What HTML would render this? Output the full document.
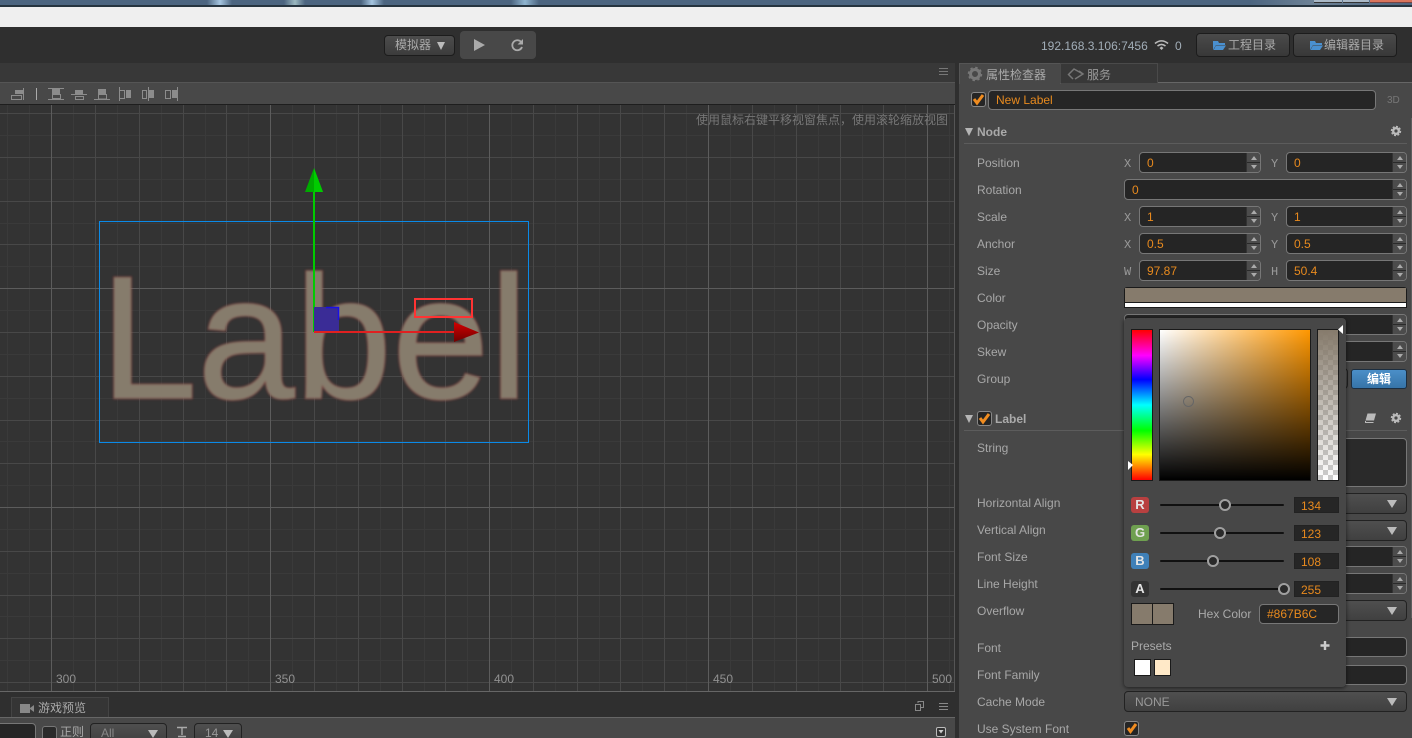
<!DOCTYPE html>
<html><head><meta charset="utf-8">
<style>
*{box-sizing:border-box}
html{margin:0;padding:0;width:1412px;height:738px;overflow:hidden;background:#333}
body{margin:0;padding:0;width:1412px;height:738px;overflow:hidden;position:relative;background:#333;font-family:"Liberation Sans","Noto Sans CJK SC",sans-serif;font-size:12px;color:#aaa}
.a,.t,.l,.i,.f,.s,.sel,.btn,.v,.chip,.n{position:absolute}
.t,.l{white-space:nowrap;line-height:14px}
.l{left:977px;color:#a8a8a8}
.x{position:absolute;font-family:"Liberation Mono",monospace;font-size:12px;color:#999;line-height:14px}
.i{height:21px;background:#252525;border:1px solid #777;border-radius:4px;color:#e88a1e;padding-left:7px;line-height:20px;overflow:hidden}
.i:after{content:"";position:absolute;right:0;top:0;bottom:0;width:13px;background:linear-gradient(#4c4c4c 0 9px,#2a2a2a 9px 10px,#4c4c4c 10px);border-left:1px solid #333}
.s1,.s2{position:absolute;width:0;height:0;border-left:3.5px solid transparent;border-right:3.5px solid transparent;z-index:2}
.s1{border-bottom:4px solid #aaa}.s2{border-top:4px solid #aaa}
.f{height:20px;background:#252525;border:1px solid #777;border-radius:4px}
.sel{height:21px;background:linear-gradient(#4f4f4f,#404040);border:1px solid #222;border-radius:4px;color:#999}
.arr{position:absolute;width:0;height:0;border-left:5px solid transparent;border-right:5px solid transparent;border-top:8px solid #bbb}
.btn{background:linear-gradient(#4a4a4a,#383838);border:1px solid #1c1c1c;border-radius:4px;color:#aaa;text-align:center}
.cb{position:absolute;width:15px;height:15px;background:#252525;border:1px solid #888;border-radius:3px}
.chip{left:1131px;width:18px;height:16px;border-radius:3px;color:#e4e4e4;font-weight:bold;font-size:13px;line-height:15px;text-align:center}
.track{position:absolute;left:1160px;width:124px;height:2px;background:#111;border-radius:1px}
.thumb{position:absolute;width:12px;height:12px;border-radius:50%;background:#2a2a2a;border:2px solid #a0a0a0}
.n{left:1294px;width:45px;height:16px;background:#262626;border:1px solid #222;color:#e88a1e;padding-left:6px;line-height:16px}
svg{position:absolute;left:0;top:0;overflow:visible}
</style></head><body>

<!-- top window strip -->
<div class="a" style="left:0;top:0;width:1412px;height:6px;background:linear-gradient(90deg,#4c6580 0,#4c6580 207px,#a5c5e0 220px,#4c6580 232px,#4c6580 284px,#9bb8c0 295px,#4c6580 305px,#4c6580 361px,#a5c5e0 372px,#4c6580 384px,#4c6580 511px,#8fb5d0 525px,#4c6580 539px,#4c6580 1250px,#6d8296 1312px,#4c6580 1412px)"></div>
<div class="a" style="left:1314px;top:0;width:28px;height:3px;background:#a9b8c6;border-bottom:1px solid #333"></div>
<div class="a" style="left:1343px;top:0;width:26px;height:3px;background:#a9b8c6;border-bottom:1px solid #333"></div>
<div class="a" style="left:1370px;top:0;width:42px;height:3px;background:#d9745c;border-bottom:1px solid #744"></div>
<div class="a" style="left:0;top:5px;width:1412px;height:2px;background:#26343f"></div>
<div class="a" style="left:0;top:7px;width:1412px;height:20px;background:#efefef"></div>
<div class="a" style="left:0;top:27px;width:1412px;height:36px;background:#2f2f2f"></div>

<!-- scene panel chrome -->
<div class="a" style="left:0;top:63px;width:955px;height:20px;background:#383838"></div>
<div class="a" style="left:0;top:82px;width:955px;height:1px;background:#555"></div>
<div class="a" style="left:0;top:83px;width:955px;height:21px;background:#484848"></div>
<div class="a" style="left:0;top:104px;width:955px;height:1px;background:#1e1e1e"></div>
<div class="a" style="left:955px;top:63px;width:4px;height:675px;background:#2f2f2f"></div>
<div class="a" style="left:0;top:105px;width:955px;height:587px;background:#333"></div>

<svg width="1412" height="738" xmlns="http://www.w3.org/2000/svg">
<defs><clipPath id="sc"><rect x="0" y="105" width="954" height="586"/></clipPath>
<filter id="bl" x="-5%" y="-5%" width="110%" height="110%"><feGaussianBlur stdDeviation="1.1"/></filter>
<linearGradient id="rg" x1="0" y1="0" x2="0" y2="1"><stop offset="0" stop-color="#d40000"/><stop offset="1" stop-color="#700000"/></linearGradient></defs>
<g clip-path="url(#sc)" shape-rendering="crispEdges" fill="none">
<path stroke="#3a3a3a" d="M7.5 105V692M29.5 105V692M73.5 105V692M117.5 105V692M161.5 105V692M205.5 105V692M248.5 105V692M292.5 105V692M336.5 105V692M380.5 105V692M424.5 105V692M467.5 105V692M511.5 105V692M555.5 105V692M599.5 105V692M642.5 105V692M686.5 105V692M730.5 105V692M774.5 105V692M818.5 105V692M862.5 105V692M905.5 105V692M949.5 105V692M0 135.5H954M0 179.5H954M0 223.5H954M0 266.5H954M0 310.5H954M0 354.5H954M0 398.5H954M0 441.5H954M0 485.5H954M0 529.5H954M0 573.5H954M0 616.5H954M0 660.5H954"/>
<path stroke="#484848" d="M95.5 105V692M139.5 105V692M183.5 105V692M226.5 105V692M314.5 105V692M358.5 105V692M402.5 105V692M445.5 105V692M533.5 105V692M577.5 105V692M620.5 105V692M664.5 105V692M752.5 105V692M796.5 105V692M840.5 105V692M883.5 105V692M0 113.5H954M0 157.5H954M0 201.5H954M0 244.5H954M0 332.5H954M0 376.5H954M0 420.5H954M0 463.5H954M0 551.5H954M0 595.5H954M0 638.5H954M0 682.5H954"/>
<path stroke="#5c5c5c" d="M51.5 105V692M270.5 105V692M489.5 105V692M708.5 105V692M927.5 105V692M0 288.5H954M0 507.5H954"/>
</g>
<g filter="url(#bl)" font-family="Liberation Sans" font-size="175">
<text x="100" y="398" fill="none" stroke="#a83030" stroke-opacity=".55" stroke-width="2.5">Label</text>
<text x="100" y="398" fill="#867b6c" stroke="#867b6c" stroke-width=".8">Label</text>
</g>
<rect x="99.5" y="221.5" width="429" height="221" fill="none" stroke="#0a8ae8" shape-rendering="crispEdges"/>
<rect x="415" y="299" width="57" height="18" fill="none" stroke="#f33" stroke-width="2" shape-rendering="crispEdges"/>
<rect x="313" y="192" width="2" height="140" fill="#0c0"/>
<path d="M314 168L323 192H305Z" fill="#0a0"/>
<path d="M314 168L323 192H314Z" fill="#0c0"/>
<rect x="314" y="307" width="25" height="25" fill="#3a2c96"/>
<path d="M326 307.5H338.5V320" fill="none" stroke="#1a10e8" stroke-width="1.5"/>
<rect x="314" y="331" width="141" height="2" fill="#e02020"/>
<path d="M454 322L479 332.5L454 342Z" fill="url(#rg)"/>
<!-- toolbar icons -->
<g fill="none" stroke="#8c8c8c" shape-rendering="crispEdges">
<path d="M23.5 88V100M11.5 95.5H21.5V99.5H11.5Z"/><rect x="15" y="90" width="8" height="4" fill="#8c8c8c" stroke="none"/>
<path d="M36.5 88V100" stroke="#aaa"/>
<path d="M48 88.5H64M48 99.5H64M52.5 94.5H60.5V98.5H52.5Z"/><rect x="52" y="89" width="8" height="5" fill="#8c8c8c" stroke="none"/>
<path d="M71 94.5H87M75.5 96.5H83.5V99.5H75.5Z"/><rect x="75" y="90" width="8" height="4" fill="#8c8c8c" stroke="none"/>
<path d="M94 99.5H110M98.5 94.5H106.5V99H98.5Z"/><rect x="98" y="89" width="8" height="5" fill="#8c8c8c" stroke="none"/>
<path d="M119.5 87V101M120 90.5H124.5V98.5H120"/><rect x="126" y="90" width="5" height="8" fill="#8c8c8c" stroke="none"/>
<path d="M148.5 87V101M142.5 90.5H146.5V98.5H142.5Z"/><rect x="149" y="90" width="5" height="8" fill="#8c8c8c" stroke="none"/>
<path d="M177.5 87V101M165.5 90.5H170.5V98.5H165.5Z"/><rect x="172" y="90" width="5" height="8" fill="#8c8c8c" stroke="none"/>
</g>
<path d="M939 68.5H948M939 71.5H948M939 74.5H948" stroke="#777" shape-rendering="crispEdges"/>
<path d="M1403 68.5H1412M1403 71.5H1412M1403 74.5H1412" stroke="#777" shape-rendering="crispEdges"/>
</svg>

<div class="t" style="left:696px;top:113px;color:#777">使用鼠标右键平移视窗焦点&#65292;使用滚轮缩放视图</div>
<div class="t" style="left:56px;top:672px;color:#919191">300</div>
<div class="t" style="left:275px;top:672px;color:#919191">350</div>
<div class="t" style="left:494px;top:672px;color:#919191">400</div>
<div class="t" style="left:713px;top:672px;color:#919191">450</div>
<div class="t" style="left:932px;top:672px;color:#919191">500</div>
<div class="a" style="left:954px;top:105px;width:1px;height:587px;background:#555"></div>

<!-- bottom panel -->
<div class="a" style="left:0;top:691px;width:955px;height:1px;background:#666"></div>
<div class="a" style="left:0;top:692px;width:955px;height:25px;background:#2f2f2f"></div>
<div class="a" style="left:0;top:717px;width:955px;height:21px;background:#484848;border-top:1px solid #666"></div>
<div class="a" style="left:11px;top:697px;width:98px;height:20px;background:#353535;border:1px solid #444;border-bottom:0"></div>
<svg width="1412" height="738"><rect x="20" y="704" width="10" height="9" fill="#888"/><path d="M30 708L34 705V712L30 709Z" fill="#888"/>
<path d="M915.5 704.5H920.5V710.5H915.5ZM918 703V701.5H923.5V707.5H921" fill="none" stroke="#888" shape-rendering="crispEdges"/>
<path d="M939 703.5H948M939 706.5H948M939 709.5H948" stroke="#888" shape-rendering="crispEdges"/>
<rect x="936.5" y="727.5" width="9" height="9" rx="1.5" fill="#333" stroke="#bbb"/><path d="M938.5 730H943.5L941 733.5Z" fill="#ccc"/>
<path d="M177 727.5H187M182 727.5V735M178 736.5H186" stroke="#aaa" fill="none" stroke-width="1.4"/></svg>
<div class="t" style="left:38px;top:701px;color:#aaa">游戏预览</div>
<div class="a" style="left:-4px;top:723px;width:40px;height:20px;background:#262626;border:1px solid #777;border-radius:4px"></div>
<div class="a" style="left:42px;top:726px;width:15px;height:16px;background:#2a2a2a;border:1px solid #777;border-radius:3px"></div>
<div class="t" style="left:60px;top:725px;color:#aaa">正则</div>
<div class="sel" style="left:90px;top:723px;width:77px;height:20px;padding-left:10px;line-height:19px;color:#888">All<div class="arr" style="left:57px;top:6px;border-top-color:#bbb"></div></div>
<div class="sel" style="left:194px;top:723px;width:48px;height:20px;padding-left:10px;line-height:19px">14<div class="arr" style="left:28px;top:6px"></div></div>

<!-- top toolbar -->
<div class="btn" style="left:384px;top:35px;width:71px;height:21px;line-height:19px;text-align:left;padding-left:10px;background:linear-gradient(#4c4c4c,#3c3c3c)">模拟器<div class="arr" style="left:52px;top:6px;border-left-width:4.5px;border-right-width:4.5px"></div></div>
<div class="a" style="left:460px;top:31px;width:76px;height:28px;background:#484848;border-radius:4px"></div>
<svg width="1412" height="738"><path d="M474 39L485 45L474 51Z" fill="#aaa"/>
<path d="M521.5 42.5A5 5 0 1 0 522 47" fill="none" stroke="#aaa" stroke-width="1.8"/><path d="M523 39V44.5H517.5Z" fill="#aaa"/>
<path d="M1155 43.5C1159 40 1164 40 1168 43.5M1157.5 46C1160 44 1163 44 1165.5 46" fill="none" stroke="#bbb" stroke-width="1.6"/><path d="M1159.5 48L1161.5 46.5L1163.5 48L1161.5 50Z" fill="#bbb"/>
</svg>
<div class="t" style="left:1041px;top:39px;color:#a2aeb8">192.168.3.106:7456</div>
<div class="t" style="left:1175px;top:39px;color:#a2aeb8">0</div>
<div class="btn" style="left:1196px;top:33px;width:94px;height:24px;line-height:23px;padding-left:18px">工程目录</div>
<div class="btn" style="left:1293px;top:33px;width:104px;height:24px;line-height:23px;padding-left:18px">编辑器目录</div>
<svg width="1412" height="738"><path d="M1213 41H1218L1219 43H1225V45H1216L1213 50Z" fill="#4a90d0"/><path d="M1216 45.5H1226L1223 50H1213.5Z" fill="#4a90d0"/>
<path d="M1310 41H1315L1316 43H1322V45H1313L1310 50Z" fill="#4a90d0"/><path d="M1313 45.5H1323L1320 50H1310.5Z" fill="#4a90d0"/></svg>

<!-- inspector -->
<div class="a" style="left:959px;top:63px;width:453px;height:20px;background:#383838"></div>
<div class="a" style="left:959px;top:82px;width:453px;height:1px;background:#666"></div>
<div class="a" style="left:959px;top:83px;width:453px;height:655px;background:#484848"></div>
<div class="a" style="left:959px;top:63px;width:102px;height:21px;background:#484848;border:1px solid #555;border-bottom:0"></div>
<div class="a" style="left:1060px;top:63px;width:98px;height:20px;background:#383838;border:1px solid #4a4a4a;border-bottom:0"></div>
<div class="a" style="left:1411px;top:118px;width:1px;height:500px;background:#5e5e5e"></div>
<svg width="1412" height="738">
<circle cx="975" cy="74" r="4.5" fill="none" stroke="#777" stroke-width="3"/><circle cx="975" cy="74" r="6.5" fill="none" stroke="#777" stroke-width="1.5" stroke-dasharray="2.5 2.6"/>
<path d="M1069 74L1074 69L1083 74M1073 79L1068 74M1075 79L1083 74L1079 71" fill="none" stroke="#777" stroke-width="1.5"/>
<g fill="#b5b5b5"><path d="M965 128H973L969 136Z"/><path d="M965 415H973L969 423Z"/></g>
<g fill="none" stroke="#bbb"><circle cx="1396" cy="131" r="2.8" stroke-width="2.4"/><circle cx="1396" cy="131" r="4.5" stroke-width="1.4" stroke-dasharray="2 1.5"/>
<circle cx="1396" cy="418" r="2.8" stroke-width="2.4"/><circle cx="1396" cy="418" r="4.5" stroke-width="1.4" stroke-dasharray="2 1.5"/></g>
<path d="M1367.5 413.5H1376L1374 420.5H1365.5Z" fill="#bbb"/><path d="M1365.5 421V422.5H1373.5" fill="none" stroke="#bbb"/>
</svg>
<div class="t" style="left:986px;top:68px;color:#aaa">属性检查器</div>
<div class="t" style="left:1087px;top:68px;color:#999">服务</div>

<div class="cb" style="left:971px;top:92px"></div>
<div class="a" style="left:988px;top:90px;width:388px;height:20px;background:#262626;border:1px solid #777;border-radius:4px;color:#e88a1e;padding-left:7px;line-height:18px">New Label</div>
<div class="t" style="left:1387px;top:94px;font-size:10px;color:#777">3D</div>
<div class="t" style="left:977px;top:125px;font-weight:bold;color:#aaa">Node</div>
<div class="a" style="left:964px;top:143px;width:443px;height:1px;background:#5c5c5c"></div>

<div class="l" style="top:156px">Position</div><div class="l" style="top:183px">Rotation</div><div class="l" style="top:210px">Scale</div><div class="l" style="top:237px">Anchor</div><div class="l" style="top:264px">Size</div><div class="l" style="top:291px">Color</div><div class="l" style="top:318px">Opacity</div><div class="l" style="top:345px">Skew</div><div class="l" style="top:372px">Group</div>
<div class="l" style="top:441px">String</div><div class="l" style="top:496px">Horizontal Align</div><div class="l" style="top:523px">Vertical Align</div><div class="l" style="top:550px">Font Size</div><div class="l" style="top:577px">Line Height</div><div class="l" style="top:604px">Overflow</div><div class="l" style="top:641px">Font</div><div class="l" style="top:668px">Font Family</div><div class="l" style="top:695px">Cache Mode</div><div class="l" style="top:722px">Use System Font</div>

<div class="x" style="left:1124px;top:157px">X</div><div class="x" style="left:1271px;top:157px">Y</div>
<div class="x" style="left:1124px;top:211px">X</div><div class="x" style="left:1271px;top:211px">Y</div>
<div class="x" style="left:1124px;top:238px">X</div><div class="x" style="left:1271px;top:238px">Y</div>
<div class="x" style="left:1124px;top:265px">W</div><div class="x" style="left:1271px;top:265px">H</div>

<div class="i" style="left:1139px;top:152px;width:122px">0</div><div class="i" style="left:1286px;top:152px;width:121px">0</div>
<div class="i" style="left:1124px;top:179px;width:283px">0</div>
<div class="i" style="left:1139px;top:206px;width:122px">1</div><div class="i" style="left:1286px;top:206px;width:121px">1</div>
<div class="i" style="left:1139px;top:233px;width:122px">0.5</div><div class="i" style="left:1286px;top:233px;width:121px">0.5</div>
<div class="i" style="left:1139px;top:260px;width:122px">97.87</div><div class="i" style="left:1286px;top:260px;width:121px">50.4</div>
<div class="i" style="left:1124px;top:314px;width:283px"></div>
<div class="i" style="left:1124px;top:341px;width:283px"></div>
<!-- spinner arrows -->
<div class="s1" style="left:1251px;top:156px"></div><div class="s2" style="left:1251px;top:165px"></div><div class="s1" style="left:1397px;top:156px"></div><div class="s2" style="left:1397px;top:165px"></div>
<div class="s1" style="left:1397px;top:183px"></div><div class="s2" style="left:1397px;top:192px"></div>
<div class="s1" style="left:1251px;top:210px"></div><div class="s2" style="left:1251px;top:219px"></div><div class="s1" style="left:1397px;top:210px"></div><div class="s2" style="left:1397px;top:219px"></div>
<div class="s1" style="left:1251px;top:237px"></div><div class="s2" style="left:1251px;top:246px"></div><div class="s1" style="left:1397px;top:237px"></div><div class="s2" style="left:1397px;top:246px"></div>
<div class="s1" style="left:1251px;top:264px"></div><div class="s2" style="left:1251px;top:273px"></div><div class="s1" style="left:1397px;top:264px"></div><div class="s2" style="left:1397px;top:273px"></div>
<div class="s1" style="left:1397px;top:318px"></div><div class="s2" style="left:1397px;top:327px"></div>
<div class="s1" style="left:1397px;top:345px"></div><div class="s2" style="left:1397px;top:354px"></div>

<!-- color bar -->
<div class="a" style="left:1124px;top:287px;width:283px;height:21px;background:#1a1a1a;border-radius:3px 3px 0 0"></div>
<div class="a" style="left:1125px;top:288px;width:281px;height:14px;background:#867b6c"></div>
<div class="a" style="left:1125px;top:303px;width:281px;height:4px;background:#fff"></div>

<!-- group -->
<div class="sel" style="left:1124px;top:368px;width:224px"></div>
<div class="a" style="left:1351px;top:369px;width:56px;height:20px;background:linear-gradient(#4b8fc8,#3674a8);border:1px solid #1c2e40;border-radius:3px;color:#fff;text-align:center;line-height:18px;font-weight:bold">编辑</div>

<!-- label section -->
<div class="cb" style="left:977px;top:411px"></div>
<div class="t" style="left:995px;top:412px;font-weight:bold;color:#aaa">Label</div>
<div class="a" style="left:964px;top:430px;width:443px;height:1px;background:#5c5c5c"></div>
<div class="a" style="left:1124px;top:438px;width:283px;height:49px;background:#2a2a2a;border:1px solid #777;border-radius:4px"></div>
<div class="sel" style="left:1124px;top:493px;width:283px"><div class="arr" style="left:262px;top:6px"></div></div>
<div class="sel" style="left:1124px;top:520px;width:283px"><div class="arr" style="left:262px;top:6px"></div></div>
<div class="i" style="left:1124px;top:546px;width:283px"></div>
<div class="i" style="left:1124px;top:573px;width:283px"></div>
<div class="s1" style="left:1397px;top:550px"></div><div class="s2" style="left:1397px;top:559px"></div>
<div class="s1" style="left:1397px;top:577px"></div><div class="s2" style="left:1397px;top:586px"></div>
<div class="sel" style="left:1124px;top:600px;width:283px"><div class="arr" style="left:262px;top:6px"></div></div>
<div class="f" style="left:1124px;top:637px;width:283px"></div>
<div class="f" style="left:1124px;top:665px;width:283px"></div>
<div class="sel" style="left:1124px;top:691px;width:283px;padding-left:10px;line-height:21px">NONE<div class="arr" style="left:262px;top:6px"></div></div>
<div class="cb" style="left:1124px;top:721px"></div>

<!-- color picker -->
<div class="a" style="left:1124px;top:318px;width:222px;height:369px;background:#474747;border-radius:4px;box-shadow:0 1px 4px rgba(0,0,0,.6)"></div>
<div class="a" style="left:1131px;top:329px;width:22px;height:152px;border:1px solid #1a1a1a;background:linear-gradient(#ff0000 0%,#ff00ff 17%,#0000ff 33%,#00ffff 50%,#00ff00 67%,#ffff00 83%,#ff0000 100%)"></div>
<div class="a" style="left:1159px;top:329px;width:152px;height:152px;border:1px solid #1a1a1a;background:linear-gradient(rgba(0,0,0,0),#000),linear-gradient(90deg,#fff,#ff9700)"></div>
<div class="a" style="left:1183px;top:396px;width:11px;height:11px;border-radius:50%;border:1px solid #666"></div>
<div class="a" style="left:1317px;top:329px;width:22px;height:152px;border:1px solid #1a1a1a;background:linear-gradient(#867b6c,rgba(134,123,108,0)),repeating-conic-gradient(#ccc 0 25%,#fff 0 50%) 0 0/10px 10px"></div>
<svg width="1412" height="738"><path d="M1128 461L1133 465L1128 470Z" fill="#fff"/><path d="M1343 325V334L1338 329.5Z" fill="#fff"/>
<path d="M1325 641V650M1320.5 645.5H1329.5" stroke="#ccc" stroke-width="2.4"/>
<path d="M1128 728L1130.5 731.5L1136 724" fill="none" stroke="#f08c20" stroke-width="3"/>
<path d="M974 99L977 103L983 95" fill="none" stroke="#f08c20" stroke-width="3"/>
<path d="M980 418L983 422L989 414" fill="none" stroke="#f08c20" stroke-width="3"/>
</svg>

<div class="chip" style="top:497px;background:#b84040">R</div>
<div class="chip" style="top:525px;background:#6fa050">G</div>
<div class="chip" style="top:553px;background:#3f80b8">B</div>
<div class="chip" style="top:581px;background:#333">A</div>
<div class="track" style="top:504px"></div><div class="track" style="top:532px"></div><div class="track" style="top:560px"></div><div class="track" style="top:588px"></div>
<div class="thumb" style="left:1219px;top:499px"></div>
<div class="thumb" style="left:1214px;top:527px"></div>
<div class="thumb" style="left:1207px;top:555px"></div>
<div class="thumb" style="left:1278px;top:583px"></div>
<div class="n" style="top:497px">134</div><div class="n" style="top:525px">123</div><div class="n" style="top:553px">108</div><div class="n" style="top:581px">255</div>
<div class="a" style="left:1131px;top:603px;width:43px;height:22px;background:#867b6c;border:1px solid #1a1a1a"></div>
<div class="a" style="left:1152px;top:603px;width:1px;height:22px;background:#1a1a1a"></div>
<div class="t" style="left:1198px;top:607px;color:#aaa">Hex Color</div>
<div class="a" style="left:1259px;top:604px;width:80px;height:20px;background:#262626;border:1px solid #777;border-radius:4px;color:#e88a1e;padding-left:7px;line-height:18px">#867B6C</div>
<div class="t" style="left:1131px;top:639px;color:#aaa">Presets</div>
<div class="a" style="left:1134px;top:659px;width:17px;height:17px;background:#fff;border:1px solid #1a1a1a"></div>
<div class="a" style="left:1154px;top:659px;width:17px;height:17px;background:#ffe9c8;border:1px solid #1a1a1a"></div>
</body></html>
